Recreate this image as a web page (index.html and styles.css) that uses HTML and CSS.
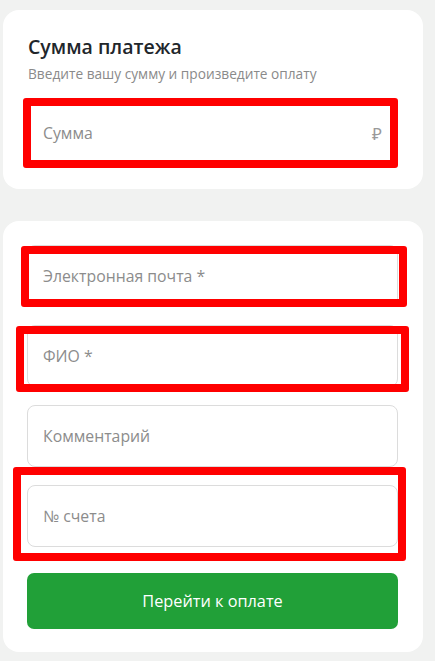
FILE: index.html
```html
<!DOCTYPE html>
<html lang="ru">
<head>
  <meta charset="UTF-8">
  <meta name="viewport" content="width=device-width, initial-scale=1.0">
  <title>Сумма платежа</title>
  <link rel="stylesheet" href="styles.css">
</head>
<body>
  <div class="page">
    <section class="card card-sum">
      <h1>Сумма платежа</h1>
      <p class="hint">Введите вашу сумму и произведите оплату</p>
      <div class="field mark-sum">
        <input type="text" placeholder="Сумма">
        <span class="currency">₽</span>
        <span class="mark"></span>
      </div>
    </section>

    <section class="card card-form">
      <div class="field mark-email">
        <input type="text" placeholder="Электронная почта *">
        <span class="mark"></span>
      </div>
      <div class="field mark-name">
        <input type="text" placeholder="ФИО *">
        <span class="mark"></span>
      </div>
      <div class="field">
        <input type="text" placeholder="Комментарий">
      </div>
      <div class="field mark-account">
        <input type="text" placeholder="№ счета">
        <span class="mark"></span>
      </div>
      <button class="pay" type="button">Перейти к оплате</button>
    </section>
  </div>
</body>
</html>
```

FILE: styles.css
```css
html,
body {
  margin: 0;
  padding: 0;
}

body {
  background: #f1f2f1;
  font-family: "Open Sans", "Noto Sans", sans-serif;
  color: #21262b;
}

.page {
  padding: 10px 12px 9px 3px;
  display: flex;
  flex-direction: column;
  gap: 32px;
}

.card {
  background: #fff;
  border-radius: 16px;
  padding: 24px 25px 25px 24px;
}

.card-sum {
  padding-top: 25px;
}

.card h1 {
  margin: 0;
  font-size: 19.5px;
  line-height: 24px;
  font-weight: 600;
  padding-left: 1px;
}

.hint {
  margin: 6px 0 19px 1px;
  font-size: 13.7px;
  line-height: 18px;
  color: #8a8a8a;
}

.card-form {
  display: flex;
  flex-direction: column;
  gap: 18px;
  padding-bottom: 23px;
}

.field {
  position: relative;
  height: 62px;
  box-sizing: border-box;
  border: 1px solid #dcdcdc;
  border-radius: 8px;
  display: flex;
  align-items: center;
  padding: 0 15px;
}

.field input {
  flex: 1;
  min-width: 0;
  border: 0;
  outline: none;
  background: transparent;
  font: inherit;
  font-size: 15.8px;
  color: #21262b;
  padding: 0;
}

.field input::placeholder {
  color: #8c8c8c;
}

.currency {
  font-size: 17px;
  color: #999;
}

/* red annotation frames drawn over the fields */
.mark {
  position: absolute;
  border: 8px solid #ff0000;
  border-radius: 3px;
  pointer-events: none;
}

.mark-sum .mark {
  left: -5px;
  right: -1px;
  top: -5px;
  bottom: -5px;
}

.mark-email .mark {
  left: -7px;
  right: -10px;
  top: 0;
  bottom: -1px;
}

.mark-name .mark {
  left: -12px;
  right: -12px;
  top: 0;
  bottom: -6px;
}

.mark-account .mark {
  left: -15px;
  right: -9px;
  top: -19px;
  bottom: -15px;
}

.pay {
  margin-top: 8px;
  height: 56px;
  border: 0;
  border-radius: 7px;
  background: #21a038;
  color: #fff;
  font: inherit;
  font-size: 16.3px;
  cursor: pointer;
}
```
